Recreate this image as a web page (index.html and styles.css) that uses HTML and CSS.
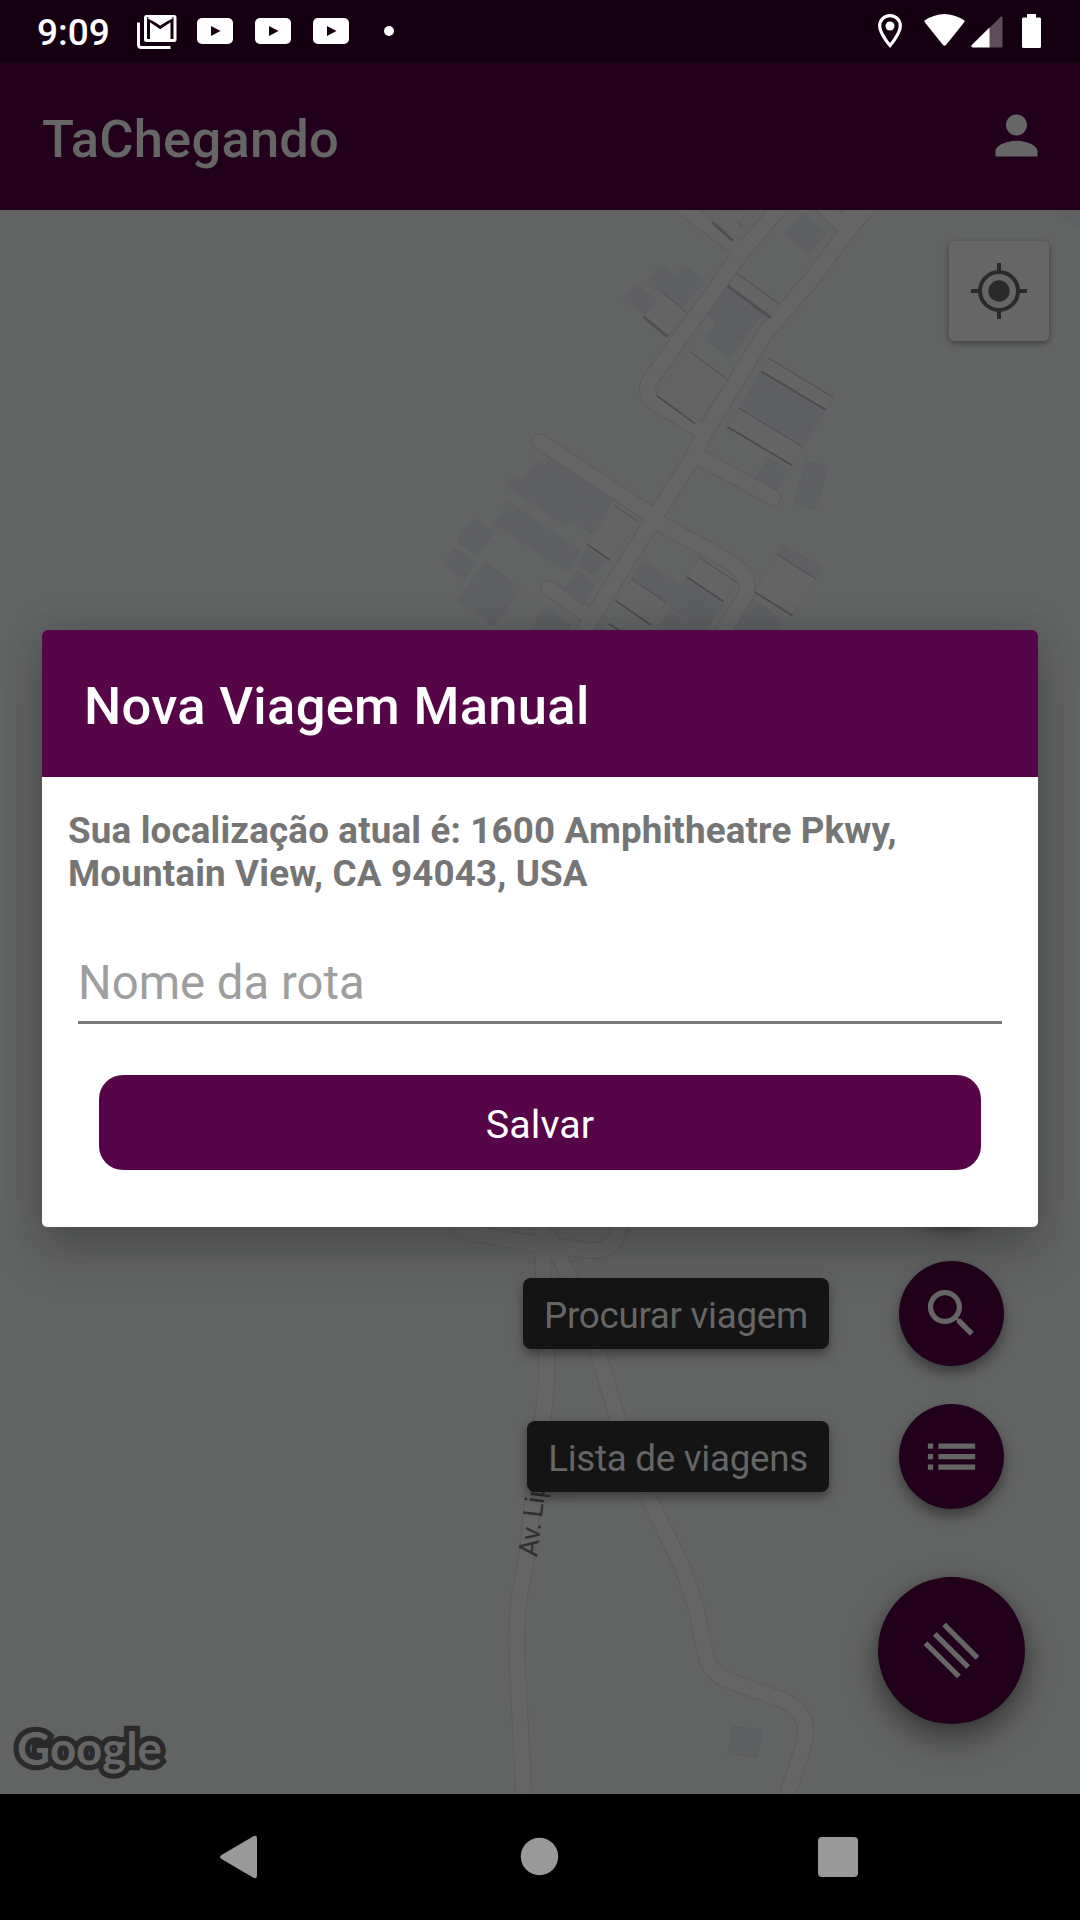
FILE: index.html
```html
<!DOCTYPE html>
<html lang="pt-BR">
<head>
<meta charset="utf-8">
<title>TaChegando</title>
<link rel="stylesheet" href="styles.css">
</head>
<body>
<div class="screen">
  <header class="status">
    <span class="clock">9:09</span>
    <svg class="gmail" width="40" height="34" viewBox="0 0 40 34">
      <path d="M1.5 7.500V29.500Q1.500 32.500 4.500 32.500H33.500" fill="none" stroke="#fff" stroke-width="3"/>
      <rect x="7" y="0" width="32.500" height="27" rx="2.500" fill="#fff"/>
      <path d="M11.500 24V4.500L23.200 12.500L35 4.500V24" fill="none" stroke="#150011" stroke-width="3"/>
      <path d="M10 3.200H36.500L23.200 9.500Z" fill="#fff"/>
    </svg>
    <svg class="tube" width="36" height="26" viewBox="0 0 36 26"><rect width="36" height="26" rx="5" fill="#fff"/><path d="M14 8L23.500 13L14 18Z" fill="#150011"/></svg>
    <svg class="tube" width="36" height="26" viewBox="0 0 36 26"><rect width="36" height="26" rx="5" fill="#fff"/><path d="M14 8L23.500 13L14 18Z" fill="#150011"/></svg>
    <svg class="tube" width="36" height="26" viewBox="0 0 36 26"><rect width="36" height="26" rx="5" fill="#fff"/><path d="M14 8L23.500 13L14 18Z" fill="#150011"/></svg>
    <i class="more"></i>
    <svg class="pin" width="24" height="34" viewBox="0 0 24 34"><path d="M12 1.600C6 1.600 1.700 6.200 1.700 12C1.700 19.500 12 31.500 12 31.500S22.300 19.500 22.300 12C22.300 6.200 18 1.600 12 1.600Z" fill="none" stroke="#fff" stroke-width="3.200"/><circle cx="12" cy="12" r="4.500" fill="#fff"/></svg>
    <svg class="wifi" width="41" height="32" viewBox="0 0 41 32"><path d="M0.500 6.500Q20.500 -6.500 40.500 6.500Q40.800 7.500 40 8.500L22 31Q20.500 32.500 19 31L1 8.500Q.2 7.500 .5 6.500Z" fill="#fff"/></svg>
    <svg class="signal" width="32" height="32" viewBox="0 0 32 32"><path d="M30 .5Q31.500 0 31.500 1.500V30Q31.500 31.500 30 31.500H18V12.500Z" fill="#5e4d5b"/><path d="M18.500 11.500V31.500H1.500Q-.5 30.500 .8 29Z" fill="#fff"/></svg>
    <svg class="battery" width="19" height="34" viewBox="0 0 19 34"><path d="M5 0H14V3.500H17.500Q19 3.500 19 5V32.500Q19 34 17.500 34H1.500Q0 34 0 32.500V5Q0 3.500 1.500 3.500H5Z" fill="#fff"/></svg>
  </header>

  <div class="appbar">
    <h1>TaChegando</h1>
    <svg width="63" height="63" viewBox="0 0 24 24"><path fill="#666" d="M12 12c2.210 0 4-1.790 4-4s-1.790-4-4-4-4 1.790-4 4 1.790 4 4 4zm0 2c-2.670 0-8 1.340-8 4v2h16v-2c0-2.660-5.330-4-8-4z"/></svg>
  </div>

  <main class="map">
    <svg class="canvas" width="1080" height="1584" viewBox="0 210 1080 1584">
      <defs>
        <g id="lanes" fill="none" stroke-linejoin="round">
          <g transform="translate(420 200) scale(.33333)">
            <path d="M780 15L955 145M1085 15L962 160L692 538Q668 580 705 608L840 690M1200 10L1275 80M1330 0L1275 65"/>
            <path d="M360 725L695 945M850 778L1060 893M720 970L925 1083Q1002 1132 975 1190L900 1310M388 1165L510 1250" stroke-linecap="round"/>
            <path d="M1360 0L1268 112L1188 222L1037 398L862 685L820 770L710 942L510 1262L480 1310"/>
          </g>
          <g transform="scale(.33333)">
            <path d="M1625 3660L1629 3800L1640 4080Q1642 4180 1625 4272L1581 4662L1560 4780Q1548 4860 1550 4950L1572 5400"/>
            <path d="M1640 3700L1760 3930L1790 4044L1854 4260L1940 4479L2040 4686Q2065 4740 2090 4836L2120 4974Q2135 5025 2190 5043L2349 5100Q2440 5145 2410 5238L2358 5400"/>
            <path d="M1362 3640Q1366 3688 1420 3700L1625 3735L1750 3748Q1815 3760 1835 3730Q1865 3700 1860 3650"/>
          </g>
        </g>
      </defs>
      <rect y="210" width="1080" height="1584" fill="#626463"/>
      <path d="M1053 210H1080V231Z" fill="#5f6062"/>
      <path d="M550 1490H574.500L574 1503L549 1500Z" fill="#5f6160"/>
      <use href="#lanes" class="casing"/>
      <use href="#lanes" class="road"/>

      <g transform="translate(420 200) scale(.33333)">
        <g class="building">
          <path d="M1151 42L1218 99L1164 162L1096 102ZM720 196L764 231L794 196L855 245L785 325L678 247ZM648 252L710 300L672 345L609 297Z"/>
          <path d="M922 260L1050 355L1020 350L930 473L855 417L890 367L863 343Z"/>
          <path d="M1024 515L1217 630L1150 742L957 625ZM1045 773L1104 808L1068 868L1008 833ZM1158 783L1223 800L1187 929L1121 911Z"/>
          <path d="M350 783L375 797L390 778L570 890L572 915L515 1002L447 960L433 977L262 858L277 832L304 848ZM267 906L480 1052L440 1117L222 971Z"/>
          <path d="M161 955L220 998L172 1068L110 1025ZM105 1045L167 1090L134 1138L69 1093ZM196 1087L303 1165L222 1278L111 1200ZM473 1113L528 1153L487 1215L430 1172ZM500 1045L555 1080L522 1128L470 1092Z"/>
          <path d="M670 1082L778 1155L738 1207L634 1137ZM800 1130L912 1205L860 1290H840L740 1212ZM748 1232L840 1290H708ZM1090 1032L1208 1105L1188 1137L1071 1063ZM998 1198L1092 1263L1075 1290H945ZM375 1220L455 1275L445 1290H328ZM530 1270L560 1290H520Z"/>
        </g>
        <g class="lot">
          <path d="M890 30H980L945 112L877 65ZM730 280L800 337L742 410L670 348ZM950 220L1079 313L1052 355L922 258ZM807 454L923 538L837 665L708 585ZM1047 475L1240 592L1217 630L1024 515ZM957 625L1150 742L1116 797L922 680Z"/>
          <path d="M583 916L655 965L570 1080L502 1034ZM634 1137L738 1207L692 1275L587 1202ZM837 1072L950 1147L910 1205L799 1130ZM1071 1063L1188 1137L1117 1247L1003 1175Z"/>
        </g>
        <path class="seam" d="M890 307L990 385M890 367L968 418M988 573L1180 688M428 818L357 922M387 783L318 890M510 865L447 960M298 932L262 990M335 957L298 1018M370 983L335 1042M405 1010L367 1065M440 1030L402 1090M1141 838L1208 853M770 1175L880 1250"/>
        <path class="wall thin" d="M730 280L800 337M950 220L1079 313M807 454L923 538M1047 475L1240 592M957 625L1150 742M583 916L650 962M634 1137L738 1207M837 1072L950 1147M1071 1063L1188 1137M952 67L970 83"/>
        <path class="wall" d="M1024 514L1217 629M922 680L1116 796M502 1034L570 1080M1003 1175L1117 1247M709 586L825 671M587 1202L692 1275M799 1130L910 1204M565 1271L597 1291"/>
        <path class="wall thick" d="M877 67L938 122M670 350L742 409M922 257L1052 353"/>
      </g>
      <path d="M733 1726.500L762 1730.500L757 1757.500L728 1753.500Z" class="building"/>
      <text class="street" transform="translate(537 1557.500) rotate(-83)">Av. Lip</text>
      <text class="logo" x="17" y="1764.500" textLength="145" lengthAdjust="spacingAndGlyphs">Google</text>
    </svg>

    <div class="locate">
      <svg width="58" height="58" viewBox="-29 -29 58 58" fill="none" stroke="#2a2a2a" stroke-width="4"><circle r="19"/><circle r="10.700" fill="#2a2a2a" stroke="none"/><path d="M0-28V-19M0 28V19M-28 0H-19M28 0H19"/></svg>
    </div>

    <div class="actions">
      <div class="action"><span class="fab"></span></div>
      <div class="action">
        <span class="tip">Procurar viagem</span>
        <span class="fab"><svg width="63" height="63" viewBox="0 0 24 24"><path fill="#666" d="M15.500 14h-.79l-.28-.27C15.410 12.590 16 11.110 16 9.500 16 5.910 13.090 3 9.500 3S3 5.910 3 9.500 5.910 16 9.500 16c1.610 0 3.090-.59 4.230-1.570l.27.28v.79l5 4.990L20.490 19l-4.990-5zm-6 0C7.010 14 5 11.990 5 9.500S7.010 5 9.500 5 14 7.010 14 9.500 11.990 14 9.500 14z"/></svg></span>
      </div>
      <div class="action">
        <span class="tip">Lista de viagens</span>
        <span class="fab"><svg width="63" height="63" viewBox="0 0 24 24"><path fill="#666" d="M3 13h2v-2H3v2zm0 4h2v-2H3v2zm0-8h2V7H3v2zm4 4h14v-2H7v2zm0 4h14v-2H7v2zM7 7v2h14V7H7z"/></svg></span>
      </div>
      <div class="action main">
        <span class="fab large"><svg width="63" height="63" viewBox="0 0 24 24"><path fill="#666" transform="rotate(45 12 12)" d="M3 18h18v-2H3v2zm0-5h18v-2H3v2zm0-7v2h18V6H3z"/></svg></span>
      </div>
    </div>
  </main>

  <nav class="nav">
    <svg width="1080" height="126" viewBox="0 1794 1080 126" fill="#999"><path d="M253 1836.500Q257 1834.500 257 1838.500V1875.500Q257 1879.500 253 1877.500L221.500 1859Q218.500 1857 221.500 1855Z"/><circle cx="539.500" cy="1856.500" r="18.700"/><rect x="818" y="1837" width="40" height="40" rx="4"/></svg>
  </nav>

  <div class="overlay">
    <section class="dialog">
      <h2>Nova Viagem Manual</h2>
      <div class="content">
        <p>Sua localização atual é: 1600 Amphitheatre Pkwy, Mountain View, CA 94043, USA</p>
        <div class="field">Nome da rota</div>
        <div class="save">Salvar</div>
      </div>
    </section>
  </div>
</div>
</body>
</html>
```
FILE: styles.css
```css
* { box-sizing: border-box; }
body { margin: 0; font-family: Roboto, sans-serif; background: #000; }
svg { display: block; flex: none; }
h1, h2, p { margin: 0; }

.screen { position: relative; width: 1080px; height: 1920px; overflow: hidden; display: flex; flex-direction: column; }

.status { height: 63px; background: #150011; color: #fff; display: flex; align-items: center; padding: 0 39px 0 37px; }
.clock { width: 100px; font-size: 37px; font-weight: 500; line-height: 63px; padding-top: 2px; }
.gmail { margin-right: 20px; }
.tube { margin: 0 22px 1px 0; }
.more { width: 10px; height: 10px; border-radius: 50%; background: #fff; margin: 0 auto 1px 13px; }
.pin { margin: 0 22px 1px 0; }
.wifi { margin: 0 6px 4px 0; }
.signal { margin-right: 19px; }
.battery { margin-bottom: 1px; }

.appbar { height: 147px; background: #22001b; color: #666; display: flex; align-items: center; justify-content: space-between; padding: 0 32px 0 42px; }
.appbar svg { margin-bottom: 2px; }
h1, h2 { font-size: 52.5px; font-weight: 500; line-height: 62px; letter-spacing: .3px; }
h1 { padding-top: 4px; letter-spacing: .2px; }

.map { position: relative; height: 1584px; overflow: hidden; }
.casing { stroke: #5b5b5b; stroke-width: 51px; }
.road { stroke: #666565; stroke-width: 45px; }
.building { fill: #5e5f62; stroke: #5b5c5f; stroke-width: 1; }
.lot { fill: #656464; stroke: #5c5c5c; stroke-width: 2; }
.seam { fill: none; stroke: #595a5d; stroke-width: 2; }
.wall { fill: none; stroke: #4a4a4a; stroke-width: 5; }
.wall.thin { stroke-width: 2.5; }
.wall.thick { stroke-width: 9; stroke: #4f4f4f; }
.street { font-size: 27px; letter-spacing: -.7px; fill: #303030; }
.logo { font: 700 46px Lato, sans-serif; fill: #666; stroke: #2a2a2a; stroke-width: 10.5; paint-order: stroke; }

.locate { position: absolute; top: 31px; right: 31px; width: 100px; height: 100px; border-radius: 5px; background: #666; box-shadow: 0 2px 6px rgba(0,0,0,.4); display: grid; place-items: center; }

.actions { position: absolute; right: 55px; bottom: 70px; display: flex; flex-direction: column; gap: 38px; align-items: flex-end; }
.action { display: flex; align-items: center; gap: 70px; padding-right: 21px; }
.action.main { padding: 30px 0 0; }
.fab { width: 105px; height: 105px; border-radius: 50%; background: #22001b; box-shadow: 0 7px 14px rgba(0,0,0,.42); display: grid; place-items: center; }
.fab.large { width: 147px; height: 147px; box-shadow: 0 14px 32px rgba(0,0,0,.45), 0 0 12px rgba(0,0,0,.12); }
.tip { height: 71px; padding: 3px 21px 0; border-radius: 8px; background: #141414; color: #666; font-size: 36.75px; line-height: 69px; letter-spacing: -.28px; white-space: nowrap; box-shadow: 0 5px 12px rgba(0,0,0,.4); }

.nav { height: 126px; background: #000; }

.overlay { position: absolute; inset: 63px 0 126px; display: flex; align-items: center; justify-content: center; }
.dialog { width: 996px; height: 597px; border-radius: 5px; overflow: hidden; background: #fff; box-shadow: 0 26px 50px rgba(0,0,0,.2), 0 0 40px rgba(0,0,0,.12); }
h2 { height: 147px; background: #550548; color: #fff; padding: 45px 42px 0; }
.content { padding: 32px 26px 0; display: flex; flex-direction: column; }
p { font-size: 36.75px; font-weight: 700; line-height: 43px; letter-spacing: .16px; color: #757575; }
.field { margin: 33px 10px 0; height: 96px; border-bottom: 3px solid #7b7b7b; font-size: 47.25px; line-height: 56px; padding-top: 27px; color: #9e9e9e; }
.save { margin: 51px 31px 0; height: 95px; border-radius: 24px; background: #550548; color: #fff; font-size: 39.375px; letter-spacing: .1px; line-height: 100px; text-align: center; }
```
